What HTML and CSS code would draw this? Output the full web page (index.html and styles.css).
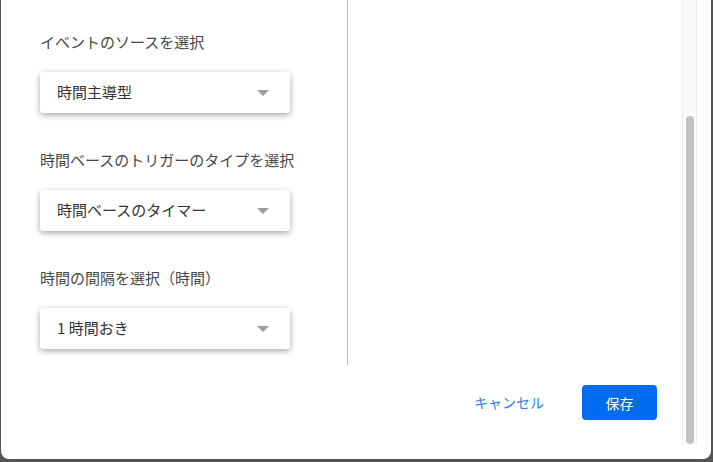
FILE: index.html
```html
<!DOCTYPE html>
<html lang="ja">
<head>
<meta charset="utf-8">
<link rel="stylesheet" href="styles.css">
</head>
<body>
<div class="dialog">
  <div class="main">
    <div class="content">
      <div class="left">
        <div class="group">
          <div class="label">イベントのソースを選択</div>
          <div class="select"><span>時間主導型</span><i class="arrow"></i></div>
        </div>
        <div class="group">
          <div class="label">時間ベースのトリガーのタイプを選択</div>
          <div class="select"><span>時間ベースのタイマー</span><i class="arrow"></i></div>
        </div>
        <div class="group">
          <div class="label">時間の間隔を選択（時間）</div>
          <div class="select"><span>1 時間おき</span><i class="arrow"></i></div>
        </div>
      </div>
      <div class="divider"></div>
      <div class="right"></div>
    </div>
    <div class="footer">
      <span class="cancel">キャンセル</span>
      <span class="save">保存</span>
    </div>
  </div>
  <div class="scrollbar"><div class="thumb"></div></div>
</div>
</body>
</html>
```
FILE: styles.css
```css
html, body {
  margin: 0;
  padding: 0;
  width: 713px;
  height: 462px;
  overflow: hidden;
  background: #555;
  font-family: "Noto Sans CJK JP", "Noto Sans", sans-serif;
}
.dialog {
  margin: 0 2px 0 1px;
  width: 710px;
  height: 459px;
  background: #fff;
  border-radius: 0 0 8px 8px;
  display: flex;
}
.main {
  width: 681px;
  display: flex;
  flex-direction: column;
}
.content {
  height: 365px;
  display: flex;
}
.left {
  width: 307px;
  padding: 31px 0 0 39px;
}
.group + .group {
  margin-top: 36px;
}
.label {
  font-size: 15px;
  line-height: 21px;
  color: #474747;
}
.select {
  margin-top: 20px;
  width: 250px;
  height: 41px;
  box-sizing: border-box;
  border-radius: 3px;
  background: #fff;
  box-shadow: 0 2px 6px rgba(0, 0, 0, 0.35);
  display: flex;
  align-items: center;
  justify-content: space-between;
  padding: 0 21px 3px 17px;
  font-size: 15px;
  color: #333;
}
.arrow {
  width: 0;
  height: 0;
  margin-top: 3px;
  border-left: 6px solid transparent;
  border-right: 6px solid transparent;
  border-top: 6px solid #9e9e9e;
}
.divider {
  width: 1px;
  background: #bdbdbd;
}
.right {
  flex: 1;
}
.footer {
  display: flex;
  justify-content: flex-end;
  align-items: center;
  padding: 20px 25px 0 0;
}
.cancel {
  font-size: 14px;
  color: #2b7de9;
  margin-right: 38px;
  padding-bottom: 2px;
}
.save {
  width: 75px;
  height: 35px;
  border-radius: 4px;
  background: #006cef;
  color: #fff;
  font-size: 14px;
  display: flex;
  align-items: center;
  justify-content: center;
}
.scrollbar {
  width: 15px;
  height: 446px;
  box-sizing: border-box;
  background: #fafafa;
  border-left: 1px solid #ececec;
  border-right: 1px solid #ececec;
  padding: 116px 3px 2px 3px;
}
.thumb {
  height: 328px;
  width: 8px;
  border-radius: 4px;
  background: #c1c1c1;
}
```
